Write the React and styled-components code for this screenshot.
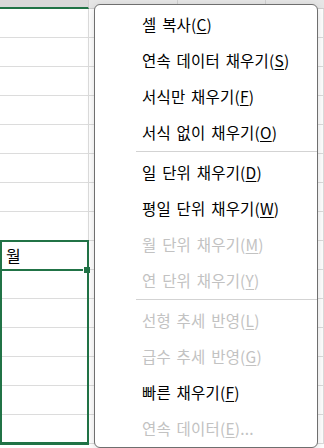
import React from 'react'
import styled, {createGlobalStyle} from 'styled-components'

const GlobalStyle = createGlobalStyle`
  html, body {
    margin: 0;
    padding: 0;
    background: #ffffff;
  }
  body {
    font-family: "Noto Sans CJK KR", "Noto Sans", sans-serif;
  }
`

const ROWS = 15
const COLS = [88, 88, 87, 60]

const menuItems = [
  {label: '셀 복사', key: 'C'},
  {label: '연속 데이터 채우기', key: 'S'},
  {label: '서식만 채우기', key: 'F'},
  {label: '서식 없이 채우기', key: 'O'},
  {separator: true},
  {label: '일 단위 채우기', key: 'D'},
  {label: '평일 단위 채우기', key: 'W'},
  {label: '월 단위 채우기', key: 'M', disabled: true},
  {label: '연 단위 채우기', key: 'Y', disabled: true},
  {separator: true},
  {label: '선형 추세 반영', key: 'L', disabled: true},
  {label: '급수 추세 반영', key: 'G', disabled: true},
  {label: '빠른 채우기', key: 'F'},
  {label: '연속 데이터', key: 'E', disabled: true, suffix: '...'},
]

function App() {
  return (
    <>
      <GlobalStyle />
      <Sheet>
        <HeaderRow>
          {COLS.map((w, i) => (
            <HeaderCell key={i} $width={w} $selected={i === 0} />
          ))}
        </HeaderRow>
        <Grid>
          {Array.from({length: ROWS}).map((_, r) =>
            COLS.map((w, c) => (
              <Cell key={`${r}-${c}`}>
                {r === 8 && c === 0 ? '월' : null}
              </Cell>
            ))
          )}
        </Grid>

        <Selection>
          <ActiveCell>
            <FillHandle />
          </ActiveCell>
        </Selection>

        <Menu>
          {menuItems.map((item, i) =>
            item.separator ? (
              <Separator key={i} />
            ) : (
              <MenuItem key={i} $disabled={item.disabled}>
                {item.label}(<u>{item.key}</u>){item.suffix}
              </MenuItem>
            )
          )}
        </Menu>
      </Sheet>
    </>
  )
}

export default App

const Sheet = styled.div`
  position: relative;
  width: 324px;
  height: 448px;
  overflow: hidden;
  background: #ffffff;
`

const HeaderRow = styled.div`
  display: flex;
  height: 9px;
`

const HeaderCell = styled.div`
  flex: 0 0 ${props => props.$width + 1}px;
  box-sizing: border-box;
  height: 9px;
  background: ${props => (props.$selected ? '#d9d9d9' : '#e6e6e6')};
  border-right: 1px solid #cfcfcf;
  border-bottom: ${props => (props.$selected ? '2px solid #217346' : '1px solid #cfcfcf')};
  &:last-child {
    flex: 1;
    border-right: none;
  }
`

const Grid = styled.div`
  display: grid;
  grid-template-columns: 89px 89px 88px 1fr;
  grid-auto-rows: 29px;
`

const Cell = styled.div`
  box-sizing: border-box;
  border-right: 1px solid #dcdcdc;
  border-bottom: 1px solid #dcdcdc;
  padding: 0 0 3px 6px;
  display: flex;
  align-items: flex-end;
  font-size: 16px;
  line-height: 22px;
  color: #000000;
`

const Selection = styled.div`
  position: absolute;
  left: 0;
  top: 240px;
  width: 89px;
  height: 205px;
  box-sizing: border-box;
  border: 2px solid #217346;
  border-bottom-width: 3px;
`

const ActiveCell = styled.div`
  position: relative;
  height: 27px;
  border-bottom: 2px solid #217346;
  margin-right: 2px;
`

const FillHandle = styled.div`
  position: absolute;
  right: -5px;
  bottom: -4px;
  width: 6px;
  height: 6px;
  background: #217346;
  border-left: 1px solid #ffffff;
`

const Menu = styled.div`
  position: absolute;
  left: 94px;
  top: 4px;
  width: 224px;
  box-sizing: border-box;
  background: #ffffff;
  border: 1px solid #6f6f6f;
  border-radius: 6px;
  box-shadow: 0 2px 8px rgba(0, 0, 0, 0.14);
  display: flex;
  flex-direction: column;
  padding: 1px 0;
`

const MenuItem = styled.div`
  height: 36px;
  display: flex;
  align-items: center;
  padding-left: 47px;
  font-size: 15.5px;
  letter-spacing: 0.2px;
  word-spacing: 2px;
  white-space: nowrap;
  color: ${props => (props.$disabled ? '#c2c2c2' : '#000000')};
  u {
    text-decoration-thickness: 1px;
    text-underline-offset: 2px;
  }
`

const Separator = styled.div`
  height: 1px;
  margin: 1px 0 2px 41px;
  background: #d3d3d3;
`
